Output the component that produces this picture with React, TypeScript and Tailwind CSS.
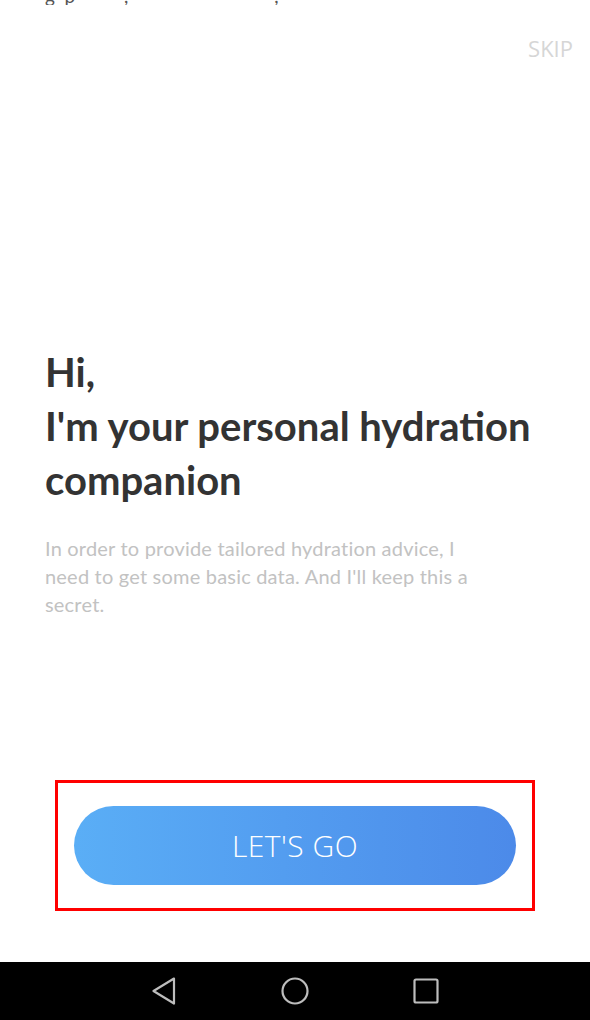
export default function App() {
  return (
    <div className="flex h-[1020px] w-[590px] flex-col bg-white font-['Lato',sans-serif]">
      {/* 上部: 切れた前行 + SKIP */}
      <div className="relative h-[5px] overflow-hidden">
        <p className="absolute -top-[18px] left-[45px] whitespace-pre text-[19px] text-[#555]">
          {"g  p          ,                              ,"}
        </p>
      </div>
      <div className="flex justify-end pr-[17px] pt-[27px]">
        <span className="font-['Open_Sans',sans-serif] text-[22px] text-[#d6d6d6]">SKIP</span>
      </div>

      <div className="flex-1 px-[45px] pt-[280px]">
        <h1 className="text-[40px] font-bold leading-[54px] text-[#333]">
          Hi,
          <br />
          I'm your personal hydration companion
        </h1>
        <p className="mt-[27px] w-[442px] text-[20px] leading-[28px] tracking-[0.2px] text-[#c2c2c2]">
          In order to provide tailored hydration advice, I need to get some basic data. And I'll keep this a secret.
        </p>
      </div>

      <div className="mx-[55px] mb-[51px] border-[3px] border-[#ff0000] px-[16px] py-[23px]">
        <button className="flex h-[79px] w-full items-center justify-center rounded-full bg-gradient-to-r from-[#5aaef6] to-[#4c8ae9] font-['Open_Sans',sans-serif] text-[30px] font-light tracking-[0.5px] text-white">
          LET'S GO
        </button>
      </div>

      <div className="flex h-[58px] items-center justify-center gap-[104px] bg-black">
        <svg width="26" height="28" viewBox="0 0 26 28" fill="none" stroke="#bdbdbd" strokeWidth="2.2" strokeLinejoin="round">
          <path d="M23 1.5 L2.5 14 L23 26.5 Z" />
        </svg>
        <svg width="28" height="28" viewBox="0 0 28 28" fill="none" stroke="#bdbdbd" strokeWidth="2.2">
          <circle cx="14" cy="14" r="12.5" />
        </svg>
        <svg width="26" height="26" viewBox="0 0 26 26" fill="none" stroke="#bdbdbd" strokeWidth="2.2">
          <rect x="1.5" y="1.5" width="23" height="23" rx="1.5" />
        </svg>
      </div>
    </div>
  )
}
